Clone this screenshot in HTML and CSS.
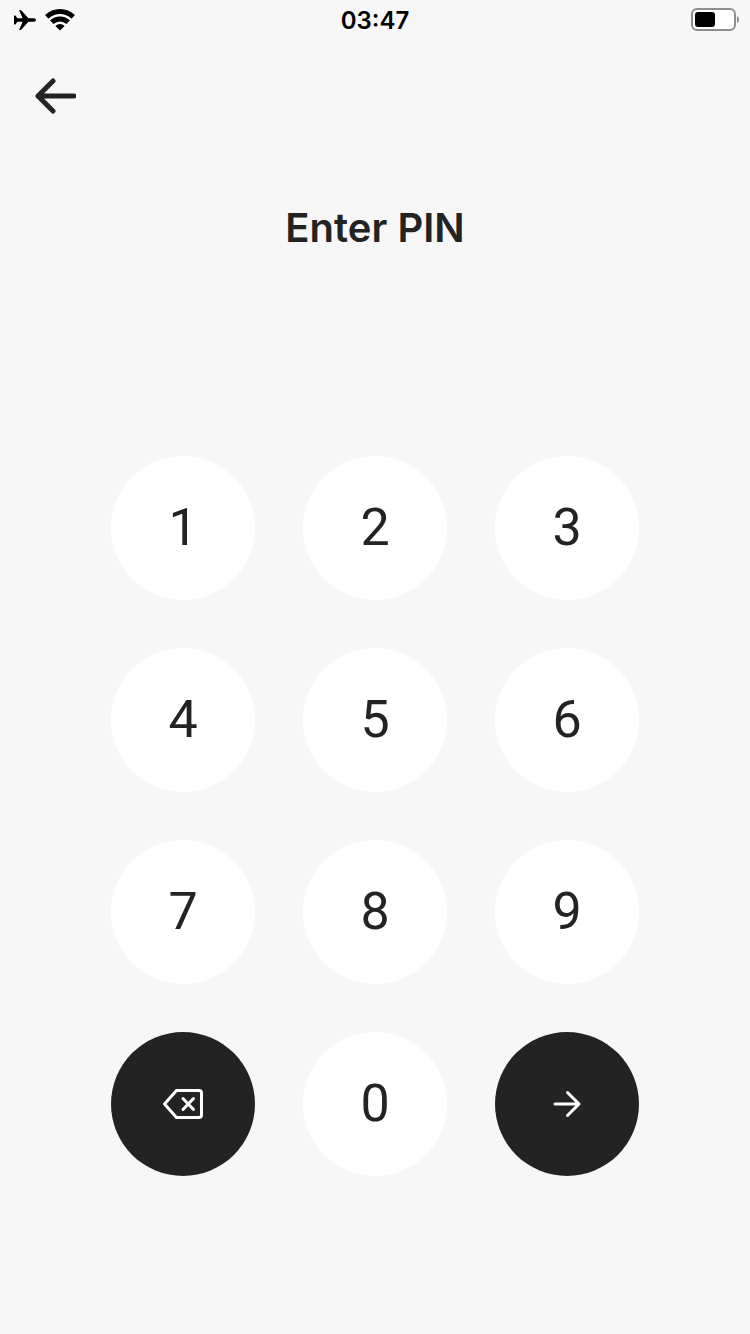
FILE: index.html
```html
<!DOCTYPE html>
<html lang="en">
  <head>
    <meta charset="UTF-8" />
    <meta name="viewport" content="width=device-width, initial-scale=1.0" />
    <title>Enter PIN</title>
    <link rel="stylesheet" href="styles.css">
  </head>
  <body>
    <!-- Status bar -->
    <div class="status-bar">
      <div class="status-left">
        <svg class="plane-icon" viewBox="0 0 22 20" aria-hidden="true">
          <path d="M20 8.2H14.4L7.4 0.6Q6.9 0.1 6.2 0.1H5.1L8.6 8.2H3.4L1.4 5.4H0V14.6H1.4L3.4 11.8H8.6L5.1 19.9H6.2Q6.9 19.9 7.4 19.4L14.4 11.8H20C21.2 11.6 22 10.8 22 10S21.2 8.4 20 8.2Z" />
        </svg>
        <svg class="wifi-icon" viewBox="0 0 30 22" aria-hidden="true">
          <path class="wifi-arc" d="M1.8 7.9A19 19 0 0 1 28.2 7.9" />
          <path class="wifi-arc" d="M6.8 13.2A11.8 11.8 0 0 1 23.2 13.2" />
          <path d="M10.4 17A6.4 6.4 0 0 1 19.6 17L15 21.6Z" />
        </svg>
      </div>
      <div class="time">03:47</div>
      <div class="status-right">
        <svg class="battery-icon" viewBox="0 0 48 24" aria-hidden="true">
          <rect class="battery-body" x="1" y="1" width="43" height="21" rx="5" />
          <rect x="4" y="4" width="20" height="15" rx="3" />
          <path class="battery-cap" d="M46 8C48.6 9 48.6 14 46 15Z" />
        </svg>
      </div>
    </div>

    <!-- Top navigation -->
    <header class="header">
      <button class="back-button" type="button" aria-label="Back">
        <svg viewBox="0 0 48 48" aria-hidden="true">
          <path d="M46 24H10M25 9L10 24L25 39" />
        </svg>
      </button>
    </header>

    <main class="pin-section">
      <h1>Enter PIN</h1>
      <div class="keypad">
        <button class="key" type="button">1</button>
        <button class="key" type="button">2</button>
        <button class="key" type="button">3</button>
        <button class="key" type="button">4</button>
        <button class="key" type="button">5</button>
        <button class="key" type="button">6</button>
        <button class="key" type="button">7</button>
        <button class="key" type="button">8</button>
        <button class="key" type="button">9</button>
        <button class="key dark-key" type="button" aria-label="Delete">
          <svg viewBox="0 0 48 48" aria-hidden="true">
            <path d="M17.5 10.5H40Q42.5 10.5 42.5 13V35Q42.5 37.5 40 37.5H17.5L5.5 24Z" />
            <path d="M24 18.5L34.5 29.5M34.5 18.5L24 29.5" />
          </svg>
        </button>
        <button class="key" type="button">0</button>
        <button class="key dark-key" type="button" aria-label="Continue">
          <svg viewBox="0 0 48 48" aria-hidden="true">
            <path d="M12 24H36M24.5 12.5L36 24L24.5 35.5" />
          </svg>
        </button>
      </div>
    </main>
  </body>
</html>
```

FILE: styles.css
```css
* {
  box-sizing: border-box;
}

body {
  display: flex;
  flex-direction: column;
  min-height: 100vh;
  margin: 0;
  background-color: #f7f7f7;
  color: #232323;
  font-family: Inter, sans-serif;
}

button {
  padding: 0;
  border: none;
  cursor: pointer;
}

/* Status bar */
.status-bar {
  display: grid;
  grid-template-columns: 1fr auto 1fr;
  align-items: center;
  height: 40px;
  padding: 0 11px;
  color: #000;
}

.status-left {
  display: flex;
  align-items: center;
  gap: 9px;
  padding-left: 3px;
}

.status-right {
  display: flex;
  justify-content: flex-end;
}

.plane-icon {
  width: 22px;
  height: 20px;
}

.wifi-icon {
  width: 30px;
  height: 22px;
}

.wifi-arc {
  fill: none;
  stroke: #000;
  stroke-width: 5;
}

.time {
  padding-top: 2px;
  font-size: 24px;
  font-weight: 600;
  line-height: 32px;
}

.battery-icon {
  width: 48px;
  height: 24px;
}

.battery-body {
  fill: #fff;
  stroke: #8e8e8e;
  stroke-width: 2;
}

.battery-cap {
  fill: #8e8e8e;
}

/* Header */
.header {
  display: flex;
  align-items: center;
  height: 112px;
  padding: 0 28px;
}

.back-button {
  width: 48px;
  height: 48px;
  background: none;
}

.back-button svg {
  display: block;
  fill: none;
  stroke: #232323;
  stroke-width: 5;
  stroke-linecap: round;
  stroke-linejoin: round;
}

/* PIN entry */
.pin-section {
  display: flex;
  flex-direction: column;
  align-items: center;
  gap: 204px;
  padding: 52px 24px;
}

h1 {
  margin: 0;
  font-size: 40px;
  font-weight: 600;
  line-height: 48px;
}

.keypad {
  display: grid;
  grid-template-columns: repeat(3, 144px);
  gap: 48px;
}

.key {
  display: flex;
  align-items: center;
  justify-content: center;
  height: 144px;
  padding-bottom: 2px;
  border-radius: 50%;
  background-color: #fff;
  color: #232323;
  font-family: Roboto, sans-serif;
  font-size: 52px;
}

.dark-key {
  padding-bottom: 0;
  background-color: #232323;
}

.dark-key svg {
  width: 48px;
  height: 48px;
  fill: none;
  stroke: #fff;
  stroke-width: 3;
  stroke-linecap: round;
  stroke-linejoin: round;
}
```
